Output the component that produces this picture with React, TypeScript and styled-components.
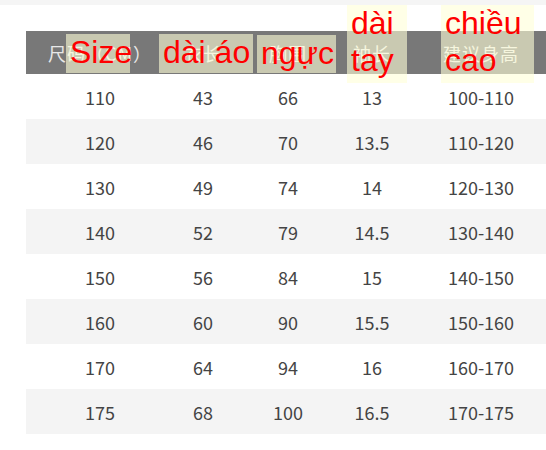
import React from 'react';
import styled, { createGlobalStyle } from 'styled-components';

const GlobalStyle = createGlobalStyle`
  body {
    margin: 0;
    background: #ffffff;
    font-family: "Noto Sans CJK SC", "Noto Sans", sans-serif;
  }
`;

const Page = styled.div`
  position: relative;
  width: 546px;
  height: 450px;
  overflow: hidden;
  border-top: 5px solid #f5f5f5;
  box-sizing: border-box;
`;

const Table = styled.div`
  margin: 26px 0 0 26px;
  width: 520px;
`;

const Row = styled.div<{ $striped?: boolean }>`
  display: grid;
  grid-template-columns: 148px 58px 112px 56px 1fr;
  align-items: center;
  height: 45px;
  background: ${({ $striped }) => ($striped ? '#f4f4f4' : '#ffffff')};
  color: #444444;
  font-size: 18px;
`;

const HeaderRow = styled(Row)`
  height: 43px;
  background: #787878;
  color: #e8e8e8;
  font-size: 18px;
  letter-spacing: 1px;
`;

const Cell = styled.div<{ $last?: boolean }>`
  text-align: center;
  white-space: nowrap;
  padding-left: ${({ $last }) => ($last ? '16px' : '0')};
`;

const Note = styled.div`
  position: absolute;
  background: rgba(255, 255, 215, 0.6);
  color: #ff0000;
  font-family: "Liberation Sans", Arial, sans-serif;
  font-size: 32px;
  line-height: 37px;
  padding-left: 4px;
  box-sizing: border-box;
  white-space: nowrap;
`;

const headers = ['尺码（CM）', '衣长', '胸围', '袖长', '建议身高'];

const rows = [
  ['110', '43', '66', '13', '100-110'],
  ['120', '46', '70', '13.5', '110-120'],
  ['130', '49', '74', '14', '120-130'],
  ['140', '52', '79', '14.5', '130-140'],
  ['150', '56', '84', '15', '140-150'],
  ['160', '60', '90', '15.5', '150-160'],
  ['170', '64', '94', '16', '160-170'],
  ['175', '68', '100', '16.5', '170-175'],
];

const notes = [
  { text: 'Size', left: 66, top: 29, width: 64, height: 39, pad: 1 },
  { text: 'dài áo', left: 159, top: 29, width: 94, height: 39, pad: 1 },
  { text: 'ngực', left: 257, top: 30, width: 79, height: 38, pad: 0 },
  { text: 'dài\ntay', left: 347, top: 0, width: 60, height: 78, pad: 0 },
  { text: 'chiều\ncao', left: 441, top: 0, width: 93, height: 78, pad: 0 },
];

export default function App() {
  return (
    <>
      <GlobalStyle />
      <Page>
        <Table>
          <HeaderRow>
            {headers.map((h, i) => (
              <Cell key={h} $last={i === 4}>{h}</Cell>
            ))}
          </HeaderRow>
          {rows.map((r, idx) => (
            <Row key={r[0]} $striped={idx % 2 === 1}>
              {r.map((v, i) => (
                <Cell key={i} $last={i === 4}>{v}</Cell>
              ))}
            </Row>
          ))}
        </Table>
        {notes.map((n) => (
          <Note
            key={n.text}
            style={{ left: n.left, top: n.top, width: n.width, height: n.height }}
          >
            {n.text.split('\n').map((line) => (
              <div key={line}>{line}</div>
            ))}
          </Note>
        ))}
      </Page>
    </>
  );
}
